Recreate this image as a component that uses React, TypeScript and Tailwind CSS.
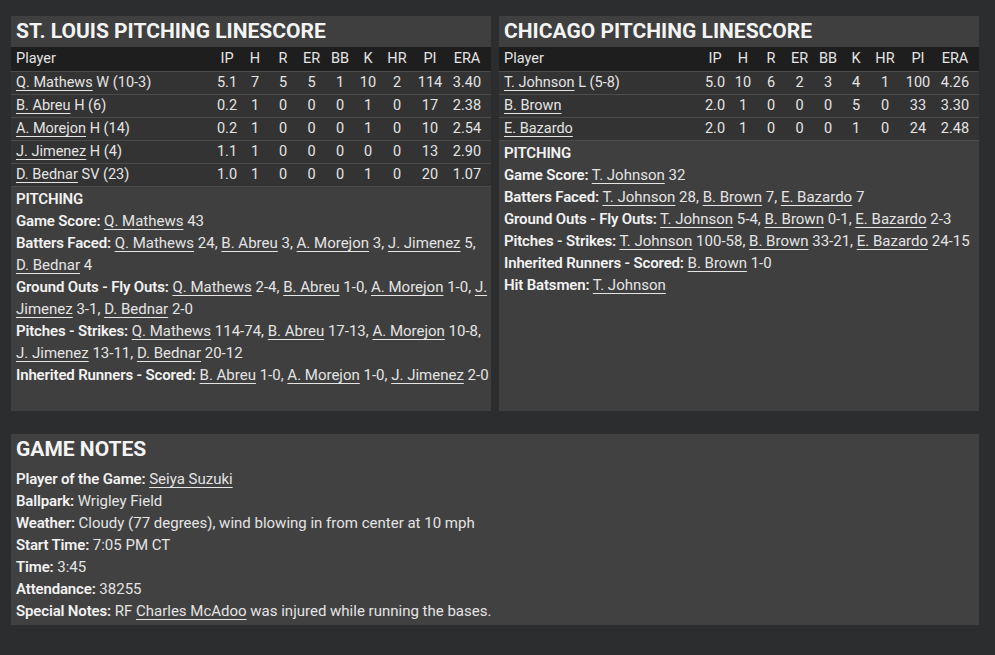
import React from "react";

type Row = { name: string; note: string; stats: string[] };

const L = ({ children }: { children: React.ReactNode }) => (
  <span className="underline underline-offset-[3px] decoration-1">{children}</span>
);

const B = ({ children }: { children: React.ReactNode }) => (
  <span className="font-semibold tracking-[-0.15px] text-[#f2f2f2]">{children}</span>
);

const cols = ["IP", "H", "R", "ER", "BB", "K", "HR", "PI", "ERA"];

const gridCls =
  "grid grid-cols-[1fr_28px_28px_28px_29px_28px_28px_30px_36px_38px] pl-[5px] pr-[5px] items-center text-[14.5px]";

function Table({ rows }: { rows: Row[] }) {
  return (
    <div>
      <div className={`${gridCls} h-[24px] bg-[#1e1e1e]`}>
        <div>Player</div>
        {cols.map((c) => (
          <div key={c} className="text-center">
            {c}
          </div>
        ))}
      </div>
      {rows.map((r, i) => (
        <div key={i} className={`${gridCls} h-[23px] bg-[#333333] border-t border-[#4c4c4c]`}>
          <div className="whitespace-nowrap">
            <L>{r.name}</L>
            {r.note ? " " + r.note : ""}
          </div>
          {r.stats.map((s, j) => (
            <div key={j} className="text-center">
              {s}
            </div>
          ))}
        </div>
      ))}
    </div>
  );
}

function Panel({
  title,
  rows,
  children,
}: {
  title: string;
  rows: Row[];
  children: React.ReactNode;
}) {
  return (
    <div className="flex flex-col bg-[#3f3f3f]">
      <div className="h-[31px] px-[5px] flex items-center text-[21px] font-bold text-[#f4f4f4]">
        {title}
      </div>
      <Table rows={rows} />
      <div className="flex-1 border-t border-[#4c4c4c] pl-[5px] pr-[2px] pt-[1px] pb-[25px] leading-[22px]">
        {children}
      </div>
    </div>
  );
}

const stl: Row[] = [
  { name: "Q. Mathews", note: "W (10-3)", stats: ["5.1", "7", "5", "5", "1", "10", "2", "114", "3.40"] },
  { name: "B. Abreu", note: "H (6)", stats: ["0.2", "1", "0", "0", "0", "1", "0", "17", "2.38"] },
  { name: "A. Morejon", note: "H (14)", stats: ["0.2", "1", "0", "0", "0", "1", "0", "10", "2.54"] },
  { name: "J. Jimenez", note: "H (4)", stats: ["1.1", "1", "0", "0", "0", "0", "0", "13", "2.90"] },
  { name: "D. Bednar", note: "SV (23)", stats: ["1.0", "1", "0", "0", "0", "1", "0", "20", "1.07"] },
];

const chc: Row[] = [
  { name: "T. Johnson", note: "L (5-8)", stats: ["5.0", "10", "6", "2", "3", "4", "1", "100", "4.26"] },
  { name: "B. Brown", note: "", stats: ["2.0", "1", "0", "0", "0", "5", "0", "33", "3.30"] },
  { name: "E. Bazardo", note: "", stats: ["2.0", "1", "0", "0", "0", "1", "0", "24", "2.48"] },
];

export default function App() {
  return (
    <div
      className="w-[995px] h-[655px] bg-[#2c2d2f] pl-[11px] pr-[16px] pt-[16px] text-[15px] text-[#e4e4e4] overflow-hidden"
      style={{ fontFamily: "Roboto, 'Liberation Sans', sans-serif" }}
    >
      <div className="grid grid-cols-2 gap-[8px]">
        <Panel title="ST. LOUIS PITCHING LINESCORE" rows={stl}>
          <div><B>PITCHING</B></div>
          <div><B>Game Score:</B> <L>Q. Mathews</L> 43</div>
          <div>
            <B>Batters Faced:</B> <L>Q. Mathews</L> 24, <L>B. Abreu</L> 3, <L>A. Morejon</L> 3,{" "}
            <L>J. Jimenez</L> 5, <L>D. Bednar</L> 4
          </div>
          <div>
            <B>Ground Outs - Fly Outs:</B> <L>Q. Mathews</L> 2-4, <L>B. Abreu</L> 1-0, <L>A. Morejon</L> 1-0,{" "}
            <L>J.</L> <L>Jimenez</L> 3-1, <L>D. Bednar</L> 2-0
          </div>
          <div>
            <B>Pitches - Strikes:</B> <L>Q. Mathews</L> 114-74, <L>B. Abreu</L> 17-13, <L>A. Morejon</L> 10-8,{" "}
            <L>J. Jimenez</L> 13-11, <L>D. Bednar</L> 20-12
          </div>
          <div className="whitespace-nowrap">
            <B>Inherited Runners - Scored:</B> <L>B. Abreu</L> 1-0, <L>A. Morejon</L> 1-0, <L>J. Jimenez</L> 2-0
          </div>
        </Panel>
        <Panel title="CHICAGO PITCHING LINESCORE" rows={chc}>
          <div><B>PITCHING</B></div>
          <div><B>Game Score:</B> <L>T. Johnson</L> 32</div>
          <div>
            <B>Batters Faced:</B> <L>T. Johnson</L> 28, <L>B. Brown</L> 7, <L>E. Bazardo</L> 7
          </div>
          <div>
            <B>Ground Outs - Fly Outs:</B> <L>T. Johnson</L> 5-4, <L>B. Brown</L> 0-1, <L>E. Bazardo</L> 2-3
          </div>
          <div>
            <B>Pitches - Strikes:</B> <L>T. Johnson</L> 100-58, <L>B. Brown</L> 33-21, <L>E. Bazardo</L> 24-15
          </div>
          <div>
            <B>Inherited Runners - Scored:</B> <L>B. Brown</L> 1-0
          </div>
          <div>
            <B>Hit Batsmen:</B> <L>T. Johnson</L>
          </div>
        </Panel>
      </div>

      <div className="mt-[23px] bg-[#414141] pb-[3px]">
        <div className="h-[31px] px-[5px] flex items-center text-[21px] font-bold text-[#f4f4f4]">
          GAME NOTES
        </div>
        <div className="px-[5px] pt-[3px] leading-[22px]">
          <div><B>Player of the Game:</B> <L>Seiya Suzuki</L></div>
          <div><B>Ballpark:</B> Wrigley Field</div>
          <div><B>Weather:</B> Cloudy (77 degrees), wind blowing in from center at 10 mph</div>
          <div><B>Start Time:</B> 7:05 PM CT</div>
          <div><B>Time:</B> 3:45</div>
          <div><B>Attendance:</B> 38255</div>
          <div><B>Special Notes:</B> RF <L>Charles McAdoo</L> was injured while running the bases.</div>
        </div>
      </div>
    </div>
  );
}
